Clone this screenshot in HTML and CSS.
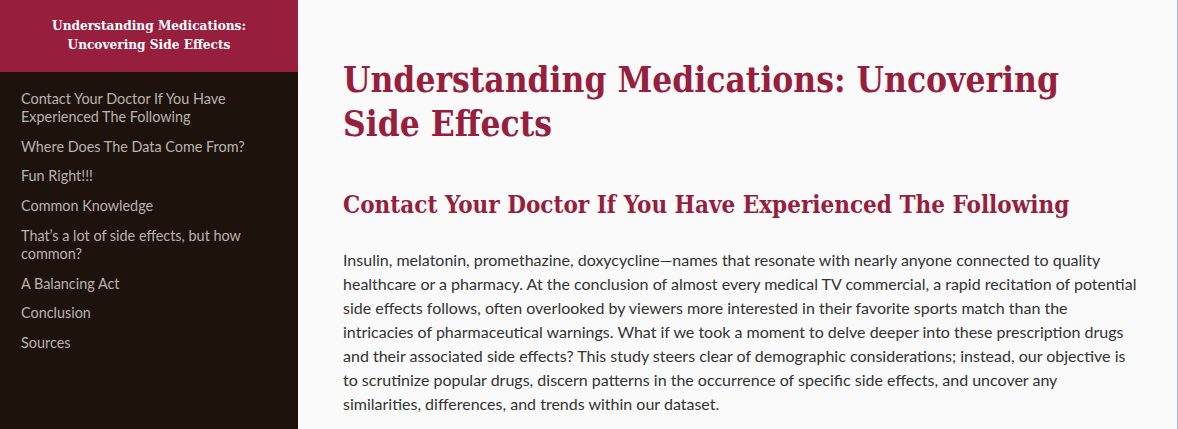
FILE: index.html
```html
<!DOCTYPE html>
<html lang="en">
<head>
<meta charset="utf-8">
<title>Understanding Medications: Uncovering Side Effects</title>
<link rel="stylesheet" href="styles.css">
</head>
<body>
<div class="layout">
  <aside class="sidebar">
    <div class="brand">Understanding Medications: Uncovering Side Effects</div>
    <nav class="toc">
      <a href="#">Contact Your Doctor If You Have Experienced The Following</a>
      <a href="#">Where Does The Data Come From?</a>
      <a href="#">Fun Right!!!</a>
      <a href="#">Common Knowledge</a>
      <a href="#">That’s a lot of side effects, but how common?</a>
      <a href="#">A Balancing Act</a>
      <a href="#">Conclusion</a>
      <a href="#">Sources</a>
    </nav>
  </aside>
  <main class="main">
    <div class="content">
      <h1 class="title">Understanding Medications: Uncovering Side Effects</h1>
      <h2 class="section">Contact Your Doctor If You Have Experienced The Following</h2>
      <p class="text">Insulin, melatonin, promethazine, doxycycline—names that resonate with nearly anyone connected to quality healthcare or a pharmacy. At the conclusion of almost every medical TV commercial, a rapid recitation of potential side effects follows, often overlooked by viewers more interested in their favorite sports match than the intricacies of pharmaceutical warnings. What if we took a moment to delve deeper into these prescription drugs and their associated side effects? This study steers clear of demographic considerations; instead, our objective is to scrutinize popular drugs, discern patterns in the occurrence of specific side effects, and uncover any similarities, differences, and trends within our dataset.</p>
    </div>
  </main>
</div>
</body>
</html>
```
FILE: styles.css
```css
* { box-sizing: border-box; }
html, body { margin: 0; padding: 0; height: 100%; }
body {
  font-family: Lato, "Noto Sans", sans-serif;
  background: #fafafa;
  overflow: hidden;
}
.layout {
  display: flex;
  height: 429px;
  border-right: 1px solid #9fb3d6;
}
.sidebar {
  width: 298px;
  flex: 0 0 298px;
  background: #1e120c;
  display: flex;
  flex-direction: column;
}
.brand {
  background: #981e3e;
  color: #fff;
  font-family: "DejaVu Serif", "Liberation Serif", serif;
  font-stretch: condensed;
  font-weight: bold;
  font-size: 13.5px;
  line-height: 19px;
  text-align: center;
  height: 72px;
  padding: 16px 30px 0;
}
.toc {
  display: flex;
  flex-direction: column;
  padding: 12px 21px 0;
}
.toc a {
  color: #b9b2ad;
  text-decoration: none;
  font-size: 14.4px;
  line-height: 17.8px;
  padding: 6px 0;
}
.main {
  flex: 1;
  padding: 0 40px 0 45px;
}
.content {
  width: 796px;
}
.title {
  font-family: "DejaVu Serif", "Liberation Serif", serif;
  font-stretch: condensed;
  color: #981e3e;
  font-weight: bold;
  font-size: 35px;
  line-height: 44px;
  margin: 58px 0 0;
  max-width: 760px;
}
.section {
  font-family: "DejaVu Serif", "Liberation Serif", serif;
  font-stretch: condensed;
  color: #981e3e;
  font-weight: bold;
  font-size: 24px;
  line-height: 30px;
  margin: 44px 0 0;
}
.text {
  color: #333;
  font-size: 16px;
  line-height: 24px;
  margin: 28px 0 0;
}
```
